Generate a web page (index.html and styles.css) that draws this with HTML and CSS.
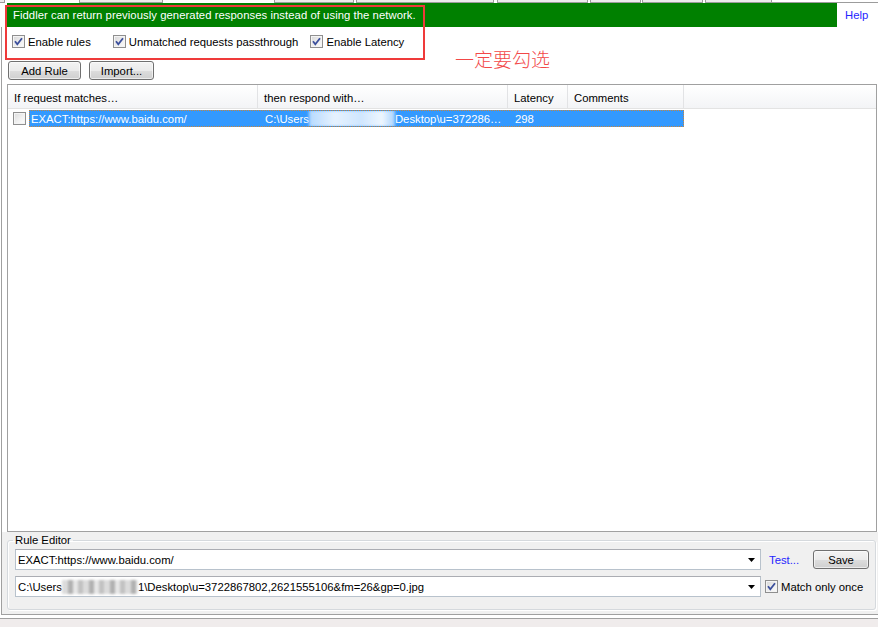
FILE: index.html
```html
<!DOCTYPE html>
<html>
<head>
<meta charset="utf-8">
<title>AutoResponder</title>
<link rel="stylesheet" href="styles.css">
</head>
<body>
<div class="app">
  <div class="tabs">
    <span class="tab t1"></span>
    <span class="tab t2"></span>
    <span class="tab t3"></span>
    <span class="tab t4"></span>
    <span class="tab t5"></span>
    <span class="tab t6"></span>
    <span class="tab t7"></span>
    <span class="tab t8"></span>
    <span class="tab-line"></span>
  </div>
  <div class="topbar">
    <div class="banner">Fiddler can return previously generated responses instead of using the network.</div>
    <span class="help">Help</span>
  </div>
  <div class="main">
    <div class="options">
      <label class="opt o1"><span class="cb"><svg viewBox="0 0 11 11" width="11" height="11"><path d="M2 5.2 L4.3 8.2 L9 2.2" fill="none" stroke="#3b4f9c" stroke-width="1.8"/></svg></span><span class="lbl">Enable rules</span></label>
      <label class="opt o2"><span class="cb"><svg viewBox="0 0 11 11" width="11" height="11"><path d="M2 5.2 L4.3 8.2 L9 2.2" fill="none" stroke="#3b4f9c" stroke-width="1.8"/></svg></span><span class="lbl">Unmatched requests passthrough</span></label>
      <label class="opt o3"><span class="cb"><svg viewBox="0 0 11 11" width="11" height="11"><path d="M2 5.2 L4.3 8.2 L9 2.2" fill="none" stroke="#3b4f9c" stroke-width="1.8"/></svg></span><span class="lbl">Enable Latency</span></label>
    </div>
    <div class="buttons">
      <button class="btn add">Add Rule</button>
      <button class="btn import">Import...</button>
    </div>
    <div class="grid">
      <div class="ghead">
        <div class="hc c1">If request matches…</div>
        <div class="hc c2">then respond with…</div>
        <div class="hc c3">Latency</div>
        <div class="hc c4">Comments</div>
        <div class="hc fill"></div>
      </div>
      <div class="grow">
        <div class="rcheck"><span class="cb"></span></div>
        <div class="sel">
          <div class="rc r1">EXACT:https://www.baidu.com/</div>
          <div class="rc r2">C:\Users<span class="blur-blue"></span>Desktop\u=372286…</div>
          <div class="rc r3">298</div>
          <div class="rc r4"></div>
        </div>
      </div>
    </div>
    <div class="editor-area">
      <fieldset class="group">
        <legend>Rule Editor</legend>
        <div class="erow">
          <div class="combo"><span class="ctext">EXACT:https://www.baidu.com/</span><svg class="arrow" width="7" height="4" viewBox="0 0 7 4"><path d="M0 0 H7 L3.5 4 Z" fill="#000"/></svg></div>
          <span class="link test">Test...</span>
          <button class="btn save">Save</button>
        </div>
        <div class="erow">
          <div class="combo"><span class="ctext">C:\Users<span class="blur-gray"></span>1\Desktop\u=3722867802,2621555106&amp;fm=26&amp;gp=0.jpg</span><svg class="arrow" width="7" height="4" viewBox="0 0 7 4"><path d="M0 0 H7 L3.5 4 Z" fill="#000"/></svg></div>
          <label class="opt once"><span class="cb"><svg viewBox="0 0 11 11" width="11" height="11"><path d="M2 5.2 L4.3 8.2 L9 2.2" fill="none" stroke="#3b4f9c" stroke-width="1.8"/></svg></span><span class="lbl">Match only once</span></label>
        </div>
      </fieldset>
    </div>
  </div>
  <div class="status"></div>
</div>
<div class="annot-box"></div>
<div class="annot-text">一定要勾选</div>
</body>
</html>
```
FILE: styles.css
```css
* { box-sizing: border-box; }
html, body { margin: 0; padding: 0; }
body {
  width: 878px;
  height: 627px;
  overflow: hidden;
  background: #fff;
  font-family: "Liberation Sans", Arial, sans-serif;
  font-size: 11.3px;
  color: #000;
  position: relative;
}
.app { display: flex; flex-direction: column; height: 627px; }

/* tab strip remnants */
.tabs { display: flex; height: 3px; flex: none; }
.tab { height: 3px; border: 1px solid #9c9c9c; border-top: 0; background: #ececec; }
.t1 { width: 5px; border-left: 0; }
.t2 { width: 84px; margin-left: 74px; }
.t3 { width: 80px; margin-left: 111px; }
.t4 { width: 138px; margin-left: 2px; }
.t5 { width: 91px; margin-left: 3px; }
.t6 { width: 51px; margin-left: 2px; }
.t7 { width: 61px; margin-left: 1px; }
.t8 { width: 67px; margin-left: 2px; }
.tab-line { flex: 1; height: 3px; border-bottom: 1px solid #9c9c9c; }

/* green banner */
.topbar { display: flex; align-items: center; height: 24px; flex: none; }
.banner {
  margin-left: 7px;
  width: 830px;
  height: 24px;
  background: #008000;
  color: #fff;
  display: flex;
  align-items: center;
  padding-left: 6px;
  letter-spacing: 0.05px;
}
.help { margin-left: 8px; color: #2525ff; }

.main {
  flex: 1;
  min-height: 0;
  display: flex;
  flex-direction: column;
  margin-left: 1px;
  border-left: 1px solid #a0a0a0;
  border-bottom: 1px solid #a0a0a0;
}

/* checkboxes */
.options { display: flex; align-items: center; height: 13px; margin-top: 8px; padding-left: 10px; flex: none; }
.opt { display: flex; align-items: center; }
.lbl { margin-left: 3px; white-space: nowrap; }
.o2 { margin-left: 22px; }
.o3 { margin-left: 12px; }
.cb {
  width: 13px;
  height: 13px;
  flex: none;
  border: 1px solid #8f8f8f;
  background: linear-gradient(135deg, #d6d6d6 0%, #eeeeee 55%, #fbfbfb 100%);
  box-shadow: inset 0 0 0 1px #f4f4f4;
  display: flex;
  align-items: center;
  justify-content: center;
}
.cb svg { display: block; }

/* buttons */
.buttons { display: flex; height: 19px; margin-top: 13px; padding-left: 6px; gap: 8px; flex: none; }
.btn {
  font: inherit;
  color: #000;
  height: 19px;
  padding: 0;
  border: 1px solid #707070;
  border-radius: 3px;
  background: linear-gradient(#f3f3f3 0%, #ebebeb 50%, #dddddd 51%, #cfcfcf 100%);
  box-shadow: inset 0 0 0 1px rgba(255,255,255,0.6);
}
.add { width: 73px; }
.import { width: 65px; }

/* grid */
.grid {
  flex: 1;
  min-height: 0;
  margin: 4px 1px 0 5px;
  border: 1px solid #a0a0a0;
  background: #fff;
}
.ghead {
  display: flex;
  height: 24px;
  border-bottom: 1px solid #e3e3e3;
  background: linear-gradient(#ffffff 0%, #f3f4f6 100%);
}
.hc {
  display: flex;
  align-items: center;
  padding-left: 6px;
  padding-top: 2px;
  border-right: 1px solid #e2e3e5;
  white-space: nowrap;
}
.c1 { width: 250px; }
.c2 { width: 250px; }
.c3 { width: 60px; }
.c4 { width: 116px; }
.fill { flex: 1; border-right: 0; }

.grow { display: flex; height: 17px; margin-top: 1px; }
.rcheck { width: 21px; display: flex; align-items: center; padding-left: 5px; }
.rcheck .cb { background: linear-gradient(135deg, #dcdcdc 0%, #f3f3f3 60%, #fdfdfd 100%); }
.sel {
  width: 655px;
  display: flex;
  background: #3399ff;
  color: #fff;
  border: 1px dotted #c7853d;
}
.rc { display: flex; align-items: center; white-space: nowrap; overflow: hidden; }
.r1 { width: 228px; padding-left: 1px; }
.r2 { width: 250px; padding-left: 7px; }
.r3 { width: 60px; padding-left: 7px; }
.r4 { flex: 1; }
.blur-blue {
  display: inline-block;
  width: 86px;
  height: 17px;
  vertical-align: middle;
  background: linear-gradient(90deg, #b5d9ff, #e6f2ff 30%, #cfe6ff 60%, #eef6ff 85%, #a9d3ff);
  filter: blur(1.5px);
}

/* rule editor */
.editor-area {
  flex: none;
  height: 82px;
  padding-top: 2px;
  background: #f0f0f0;
}
.group {
  margin: 0 2px 0 5px;
  padding: 2px 6px 12px 7px;
  border: 1px solid #d5d9dd;
  border-radius: 3px;
  box-shadow: 1px 1px 0 #fff, inset 1px 1px 0 #fff;
  height: 76px;
  min-width: 0;
}
.group legend {
  padding: 0 2px;
  margin-left: -2px;
  line-height: 13px;
  height: 13px;
}
.erow { display: flex; align-items: center; height: 21px; }
.erow + .erow { margin-top: 6px; }
.combo {
  width: 746px;
  height: 21px;
  flex: none;
  display: flex;
  align-items: center;
  padding-left: 2px;
  padding-right: 5px;
  background: #fff;
  border: 1px solid #b8c2cc;
  border-top-color: #abadb3;
}
.ctext { white-space: nowrap; display: flex; align-items: center; }
.arrow { margin-left: auto; display: block; }
.link { color: #2525ff; }
.test { margin-left: 8px; }
.save { width: 56px; margin-left: auto; }
.once { margin-left: 4px; }
.blur-gray {
  display: inline-block;
  width: 76px;
  height: 14px;
  background: repeating-linear-gradient(90deg, #d8d8d8 0 6px, #a9a9a9 6px 11px, #e4e4e4 11px 16px, #bcbcbc 16px 21px);
  filter: blur(1px);
  opacity: 0.9;
}

.status {
  flex: none;
  height: 12px;
  background: linear-gradient(#fff 0 3px, #a0a0a0 3px 4px, #f0ecec 4px);
}

/* annotation overlay */
.annot-box {
  position: absolute;
  left: 5px;
  top: 5px;
  width: 420px;
  height: 55px;
  border: 2px solid #ef3a3a;
}
.annot-text {
  position: absolute;
  left: 455px;
  top: 49px;
  font-family: "Noto Sans CJK SC", sans-serif;
  font-size: 19px;
  font-weight: 300;
  line-height: 1;
  color: #f24848;
}
```
